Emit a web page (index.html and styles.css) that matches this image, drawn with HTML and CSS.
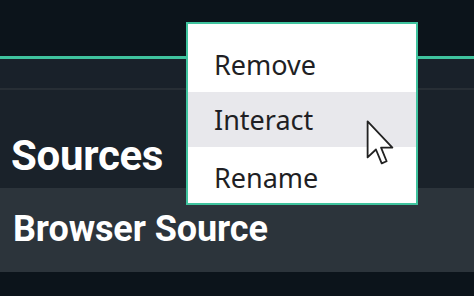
FILE: index.html
```html
<!DOCTYPE html>
<html>
<head>
<meta charset="utf-8">
<link rel="stylesheet" href="styles.css">
</head>
<body>
<div class="app">
  <div class="topbar"></div>
  <div class="accent"></div>
  <div class="toolbar"></div>
  <div class="dock-title"><span>Sources</span></div>
  <div class="source-row"><span>Browser Source</span></div>
  <div class="footer"></div>
  <div class="menu">
    <div class="item">Remove</div>
    <div class="item hover">Interact</div>
    <div class="item last">Rename</div>
    <svg class="cursor" width="28" height="47" viewBox="0 0 13 22">
      <path d="M0.7 0.7 L0.7 17.5 L4.6 13.8 L7.3 20.3 L9.6 19.3 L7 12.9 L12.3 12.9 Z" fill="#fff" stroke="#222" stroke-width="0.85" stroke-linejoin="round"/>
    </svg>
  </div>
</div>
</body>
</html>
```

FILE: styles.css
```css
html, body {
  margin: 0;
  padding: 0;
  background: #0c141b;
}
.app {
  position: relative;
  width: 474px;
  height: 296px;
  overflow: hidden;
  display: flex;
  flex-direction: column;
  font-family: Roboto, "Liberation Sans", sans-serif;
}
.topbar {
  height: 56px;
  background: #0c141b;
}
.accent {
  height: 3px;
  background: #3fc39e;
}
.toolbar {
  height: 29px;
  background: #19212a;
  border-bottom: 2px solid #272e35;
}
.dock-title {
  height: 98px;
  background: #1a222a;
  display: flex;
  align-items: center;
  padding-left: 11px;
  color: #fff;
  font-weight: 700;
  font-size: 42px;
  letter-spacing: -0.3px;
}
.dock-title span {
  transform: translateY(16px);
}
.source-row {
  height: 84px;
  background: #2c343b;
  display: flex;
  align-items: center;
  padding-left: 13px;
  color: #fff;
  font-weight: 700;
  font-size: 36px;
  letter-spacing: -0.1px;
}
.source-row span {
  transform: translateY(-1px);
}
.footer {
  flex: 1;
  background: #0c141b;
}
.menu {
  position: absolute;
  left: 186px;
  top: 22px;
  width: 228px;
  height: 166px;
  background: #fff;
  border: 2px solid #3fc39e;
  padding-top: 13px;
  font-family: "Noto Sans", "Open Sans", sans-serif;
}
.menu .item {
  height: 55px;
  line-height: 55px;
  padding-left: 26px;
  font-size: 27px;
  color: #1f1f24;
}
.menu .hover {
  background: #e8e8ec;
}
.menu .last {
  height: 56px;
  line-height: 48px;
  padding-top: 7px;
  box-sizing: border-box;
}
.cursor {
  position: absolute;
  left: 178px;
  top: 96px;
}
```
